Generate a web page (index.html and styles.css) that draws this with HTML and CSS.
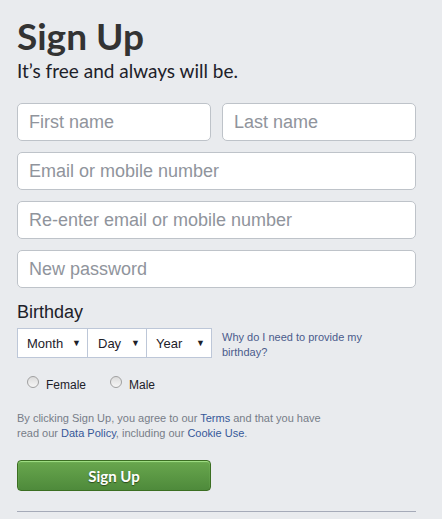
FILE: index.html
```html
<!DOCTYPE html>
<html lang="en">
<head>
    <meta charset="UTF-8">
    <title>Sign Up</title>
    <link rel="stylesheet" href="styles.css">
</head>
<body>
    <div class="signup">
        <h1>Sign Up</h1>
        <p class="tagline">It’s free and always will be.</p>

        <form class="signup-form">
            <div class="name-row">
                <input type="text" placeholder="First name">
                <input type="text" placeholder="Last name">
            </div>
            <input type="text" placeholder="Email or mobile number">
            <input type="text" placeholder="Re-enter email or mobile number">
            <input type="password" placeholder="New password">

            <div class="birthday-label">Birthday</div>
            <div class="birthday-row">
                <div class="selects">
                    <div class="fake-select month">Month <span class="arrow">▼</span></div>
                    <div class="fake-select day">Day <span class="arrow">▼</span></div>
                    <div class="fake-select year">Year <span class="arrow">▼</span></div>
                </div>
                <a class="why-link" href="#">Why do I need to provide my birthday?</a>
            </div>

            <div class="gender-row">
                <label><span class="radio"></span>Female</label>
                <label><span class="radio"></span>Male</label>
            </div>

            <p class="terms">By clicking Sign Up, you agree to our <a href="#">Terms</a> and that you have<br>read our <a href="#">Data Policy</a>, including our <a href="#">Cookie Use</a>.</p>

            <button type="button" class="signup-btn">Sign Up</button>
        </form>

        <hr class="divider">
    </div>
</body>
</html>
```

FILE: styles.css
```css
body {
    margin: 0;
    background-color: #e9ebee;
    font-family: "Liberation Sans", Arial, sans-serif;
    color: #1d2129;
}

.signup {
    width: 399px;
    padding: 12px 0 0 17px;
}

h1 {
    font-family: Lato, sans-serif;
    font-size: 37px;
    font-weight: 700;
    color: #333;
    margin: 0;
    line-height: 48px;
}

.tagline {
    font-family: Lato, sans-serif;
    font-size: 19px;
    color: #1d2129;
    margin: 0 0 21px 0;
    line-height: 22px;
}

.signup-form {
    display: flex;
    flex-direction: column;
    gap: 11px;
}

.name-row {
    display: flex;
    gap: 11px;
}

input[type="text"], input[type="password"] {
    box-sizing: border-box;
    width: 100%;
    height: 38px;
    border: 1px solid #bec3c9;
    border-radius: 5px;
    padding: 0 11px;
    font-family: "Liberation Sans", Arial, sans-serif;
    font-size: 18px;
    background: #fff;
}

.name-row input {
    width: 194px;
}

input::placeholder {
    color: #90949c;
}

.birthday-label {
    font-size: 18px;
    margin-top: 1px;
    line-height: 24px;
    margin-bottom: -7px;
}

.birthday-row {
    display: flex;
    align-items: flex-start;
    gap: 10px;
}

.selects {
    display: flex;
}

.fake-select {
    box-sizing: border-box;
    height: 30px;
    background: #fff;
    border: 1px solid #bdc7d8;
    font-size: 13px;
    display: flex;
    align-items: center;
    justify-content: space-between;
    padding: 0 6px 0 9px;
}

.fake-select + .fake-select {
    border-left: none;
}

.month { width: 71px; }
.day { width: 59px; padding-left: 10px; }
.year { width: 65px; padding-left: 9px; }

.arrow {
    font-size: 9px;
}

.why-link {
    font-size: 11px;
    color: #4b5b8c;
    text-decoration: none;
    width: 150px;
    line-height: 15px;
    margin-top: 2px;
}

.gender-row {
    display: flex;
    gap: 24px;
    padding-left: 10px;
    margin-top: 7px;
    font-size: 12px;
}

.gender-row label {
    display: flex;
    align-items: center;
}

.radio {
    display: inline-block;
    width: 10px;
    height: 10px;
    border-radius: 50%;
    border: 1px solid #a0a0a0;
    background: linear-gradient(#dcdcdc, #f6f6f6);
    margin-right: 7px;
    position: relative;
    top: -3px;
}

.terms {
    font-size: 11px;
    color: #777d88;
    line-height: 15px;
    margin: 8px 0 0 0;
}

.terms a {
    color: #365899;
    text-decoration: none;
}

.signup-btn {
    margin-top: 8px;
    width: 194px;
    height: 31px;
    border: 1px solid #3b6e22;
    border-radius: 4px;
    background: linear-gradient(#69a74e, #4e8a3b);
    box-shadow: inset 0 1px 1px #a4e388;
    color: #fff;
    font-family: Lato, sans-serif;
    font-weight: 700;
    font-size: 15px;
    text-shadow: 0 1px 1px #2c4d1c;
    cursor: pointer;
}

.divider {
    border: none;
    border-top: 1px solid #a5aab8;
    margin: 20px 0 0 0;
}
```
